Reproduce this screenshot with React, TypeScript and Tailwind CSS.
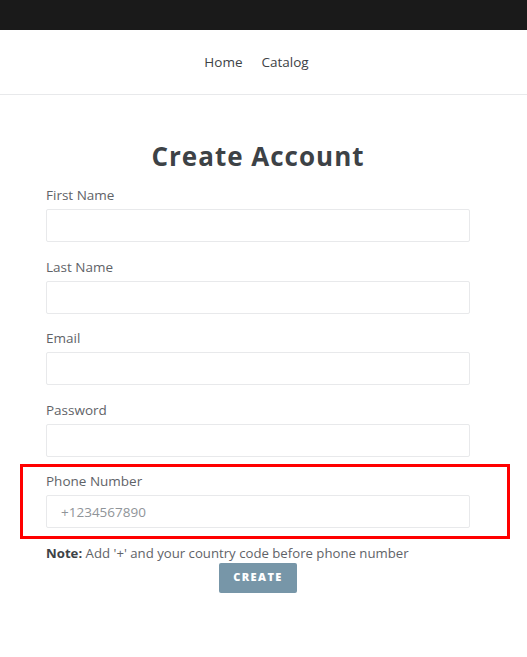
import React from 'react'

const fields = [
    { label: 'First Name', type: 'text' },
    { label: 'Last Name', type: 'text' },
    { label: 'Email', type: 'email' },
    { label: 'Password', type: 'password' },
]

const Field = ({ label, type, placeholder }: { label: string; type: string; placeholder?: string }) => (
    <div className="mb-[14.5px]">
        <label className="block mb-[4px] h-[20px] leading-[20px] text-[13.5px] text-[#5f6368]">{label}</label>
        <input
            type={type}
            placeholder={placeholder}
            className="block w-full h-[33px] border border-[#e8e9eb] rounded-[2px] px-[14px] text-[13.5px] text-[#3d4246] placeholder:text-[#8f9499] outline-none"
        />
    </div>
)

export default function App() {
    return (
        <div className="min-h-[657px] bg-white font-['Open_Sans',sans-serif]">
            <div className="h-[30px] bg-[#1a1a1a]" />

            {/* Nav */}
            <nav className="h-[65px] border-b border-[#e8e9eb] flex items-center justify-center gap-[19px] pr-[14px]">
                <a href="#" className="text-[13.5px] text-[#3d4246]">Home</a>
                <a href="#" className="text-[13.5px] text-[#3d4246]">Catalog</a>
            </nav>

            <div className="ml-[46px] w-[424px] pt-[43px]">
                <h1 className="text-center text-[26px] leading-[36px] font-bold tracking-[1px] text-[#3d4246] mb-[11px]">
                    Create Account
                </h1>

                {fields.map((f) => (
                    <Field key={f.label} label={f.label} type={f.type} />
                ))}

                {/* Phone */}
                <div className="relative">
                    <div className="absolute -left-[26px] -right-[40px] -top-[7px] -bottom-[11px] border-[3px] border-[#ff0000] pointer-events-none" />
                    <Field label="Phone Number" type="tel" placeholder="+1234567890" />
                </div>

                <p className="h-[20px] leading-[20px] text-[13.2px] text-[#5f6368]">
                    <strong className="text-[#3d4246]">Note:</strong> Add '+' and your country code before phone number
                </p>

                <div className="flex justify-center">
                    <button className="w-[78px] h-[30px] bg-[#7796a8] rounded-[2px] text-white text-[11px] font-extrabold tracking-[1.4px]">
                        CREATE
                    </button>
                </div>
            </div>
        </div>
    )
}
